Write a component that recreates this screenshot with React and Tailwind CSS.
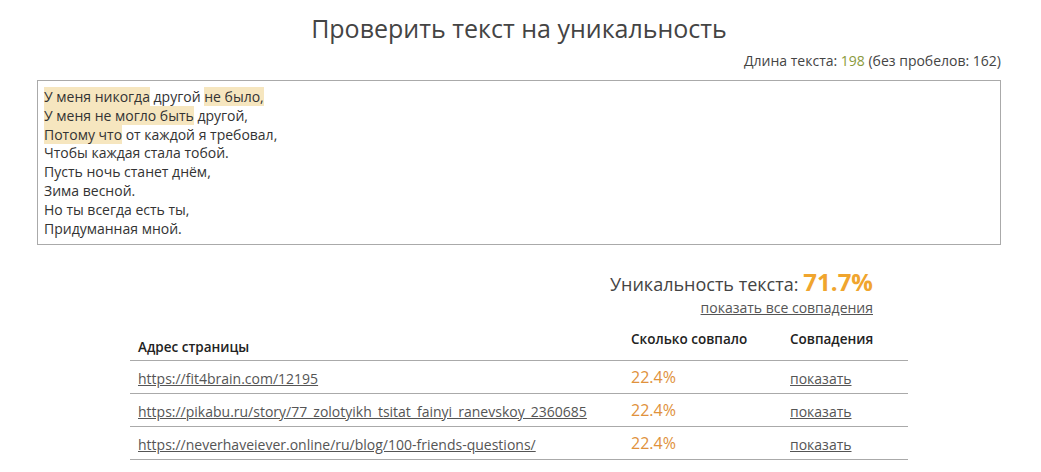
export default function App() {
  const hl = "bg-[#f6e6bf]";
  const rows = [
    "https://fit4brain.com/12195",
    "https://pikabu.ru/story/77_zolotyikh_tsitat_fainyi_ranevskoy_2360685",
    "https://neverhaveiever.online/ru/blog/100-friends-questions/",
  ];
  return (
    <div className="w-[1041px] h-[472px] bg-white overflow-hidden text-[#444]" style={{ fontFamily: '"Open Sans", sans-serif' }}>
      <div className="w-[964px] ml-[37px]">
        <h1 className="text-[25px] leading-[32px] text-center pt-[12px] text-[#444]">Проверить текст на уникальность</h1>
        <div className="text-right text-[14px] leading-[18px] mt-[8px] text-[#444]">
          Длина текста: <span className="text-[#8a9a3c]">198</span> (без пробелов: 162)
        </div>
        <div className="mt-[10px] border border-[#aaa] h-[165px] px-[6px] pt-[7px] text-[14px] leading-[18.8px] text-[#333]">
          <div><span className={hl}>У меня никогда</span> другой <span className={hl}>не было,</span></div>
          <div><span className={hl}>У меня не могло быть</span> другой,</div>
          <div><span className={hl}>Потому что</span> от каждой я требовал,</div>
          <div>Чтобы каждая стала тобой.</div>
          <div>Пусть ночь станет днём,</div>
          <div>Зима весной.</div>
          <div>Но ты всегда есть ты,</div>
          <div>Придуманная мной.</div>
        </div>
        <div className="w-[836px] flex flex-col items-end mt-[22px]">
          <div className="flex items-baseline gap-[5px]">
            <span className="text-[18px] text-[#444]">Уникальность текста:</span>
            <span className="text-[24px] font-bold text-[#f0a52e] leading-[30px]">71.7%</span>
          </div>
          <a className="text-[14px] underline text-[#555] leading-[18px] mt-[1px]">показать все совпадения</a>
        </div>
        <table className="ml-[93px] w-[778px] mt-[4px] text-[14px] border-collapse">
          <thead>
            <tr className="border-b border-[#aaa]">
              <th className="text-left font-semibold text-[13.5px] text-[#222] pl-[8px] h-[39px] align-bottom pb-[2px]">Адрес страницы</th>
              <th className="text-left font-semibold text-[13.5px] text-[#222] w-[159px] align-bottom pb-[10px]">Сколько совпало</th>
              <th className="text-left font-semibold text-[13.5px] text-[#222] w-[118px] align-bottom pb-[10px]">Совпадения</th>
            </tr>
          </thead>
          <tbody>
            {rows.map((r) => (
              <tr key={r} className="border-b border-[#aaa] h-[33px]">
                <td className="pl-[8px] align-top pt-[7px]"><a className="underline text-[#555]">{r}</a></td>
                <td className="align-top pt-[4px] text-[16px] text-[#e0913b]">22.4%</td>
                <td className="align-top pt-[7px]"><a className="underline text-[#555]">показать</a></td>
              </tr>
            ))}
          </tbody>
        </table>
      </div>
    </div>
  );
}
